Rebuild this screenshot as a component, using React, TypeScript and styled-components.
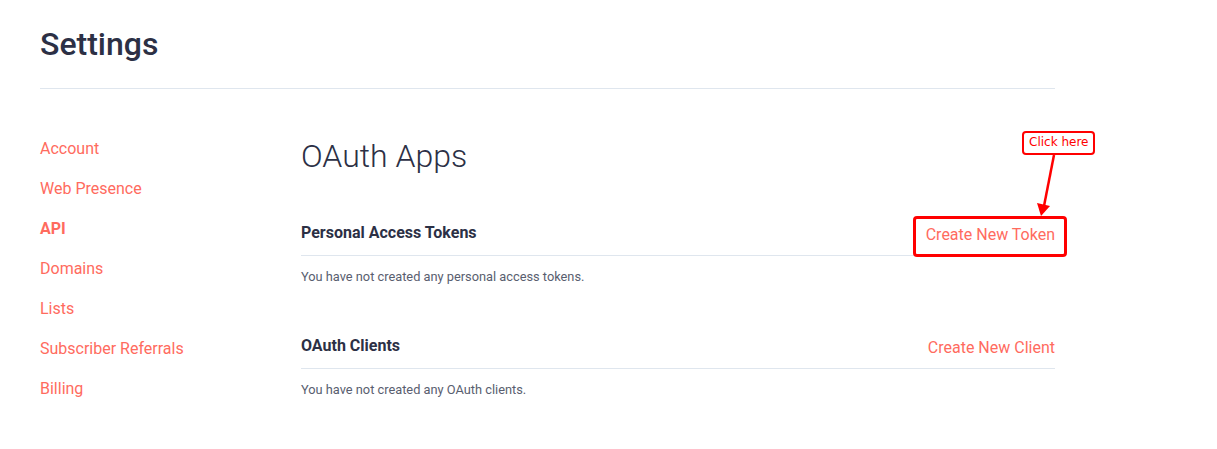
import React from 'react';
import styled, { createGlobalStyle } from 'styled-components';

const GlobalStyle = createGlobalStyle`
  html, body {
    margin: 0;
    padding: 0;
    background: #ffffff;
    font-family: Roboto, 'Liberation Sans', sans-serif;
  }
`;

const coral = '#ff6b5e';
const ink = '#2c3045';

export const Page = styled.div`
  position: relative;
  width: 1015px;
  padding: 24px 0 20px 40px;
`;

export const Title = styled.h1`
  margin: 0;
  font-size: 32px;
  line-height: 40px;
  font-weight: 500;
  color: ${ink};
`;

export const Rule = styled.hr`
  margin: 24px 0 0;
  border: 0;
  border-top: 1px solid #dfe6ee;
`;

export const Layout = styled.div`
  display: grid;
  grid-template-columns: 261px 1fr;
  padding-top: 40px;
`;

export const SideNav = styled.nav`
  display: flex;
  flex-direction: column;
`;

export const NavItem = styled.a<{ $active?: boolean }>`
  font-size: 16px;
  line-height: 40px;
  color: ${coral};
  font-weight: ${({ $active }) => ($active ? 700 : 400)};
  text-decoration: none;
  cursor: pointer;
`;

export const Main = styled.main`
  padding-top: 7px;
`;

export const Heading = styled.h2`
  margin: 0 0 45px;
  font-size: 32px;
  line-height: 40px;
  font-weight: 300;
  color: ${ink};
`;

export const Section = styled.section`
  & + & {
    margin-top: 47px;
  }
`;

export const SectionHead = styled.div`
  display: flex;
  justify-content: space-between;
  align-items: flex-start;
  padding-bottom: 6px;
  border-bottom: 1px solid #dfe6ee;
`;

export const SectionTitle = styled.h3`
  margin: 0;
  font-size: 16px;
  line-height: 24px;
  font-weight: 700;
  color: ${ink};
`;

export const ActionLink = styled.a`
  position: relative;
  font-size: 16px;
  line-height: 28px;
  color: ${coral};
  text-decoration: none;
  cursor: pointer;
`;

export const Empty = styled.p`
  margin: 11px 0 0;
  font-size: 12.8px;
  line-height: 20px;
  color: #595e6f;
`;

/* red annotation drawn on top of the token link */
export const Highlight = styled.span`
  position: absolute;
  left: -13px;
  right: -12px;
  top: -5px;
  bottom: -8px;
  border: 3px solid #ff0000;
  border-radius: 4px;
  pointer-events: none;
`;

export const Callout = styled.div`
  position: absolute;
  left: 1022px;
  top: 131px;
  padding: 1px 5px 2px;
  border: 2px solid #ff0000;
  border-radius: 4px;
  background: #ffffff;
  font-family: 'DejaVu Sans', sans-serif;
  font-size: 12px;
  line-height: 17px;
  color: #ff0000;
  white-space: nowrap;
`;

export const Pointer = styled.svg`
  position: absolute;
  left: 1030px;
  top: 150px;
  overflow: visible;
  pointer-events: none;
`;

const navItems = [
  'Account',
  'Web Presence',
  'API',
  'Domains',
  'Lists',
  'Subscriber Referrals',
  'Billing',
];

const App: React.FC = () => {
  return (
    <>
      <GlobalStyle />
      <Page>
        <Title>Settings</Title>
        <Rule />
        <Layout>
          <SideNav>
            {navItems.map((item) => (
              <NavItem key={item} $active={item === 'API'}>
                {item}
              </NavItem>
            ))}
          </SideNav>
          <Main>
            <Heading>OAuth Apps</Heading>
            <Section>
              <SectionHead>
                <SectionTitle>Personal Access Tokens</SectionTitle>
                <ActionLink>
                  Create New Token
                  <Highlight />
                </ActionLink>
              </SectionHead>
              <Empty>You have not created any personal access tokens.</Empty>
            </Section>
            <Section>
              <SectionHead>
                <SectionTitle>OAuth Clients</SectionTitle>
                <ActionLink>Create New Client</ActionLink>
              </SectionHead>
              <Empty>You have not created any OAuth clients.</Empty>
            </Section>
          </Main>
        </Layout>
        <Pointer width="40" height="70">
          <line x1="24" y1="5" x2="14" y2="56" stroke="#ff0000" strokeWidth="2.5" />
          <polygon points="7,53 20,56 11,66" fill="#ff0000" />
        </Pointer>
        <Callout>Click here</Callout>
      </Page>
    </>
  );
};

export default App;
